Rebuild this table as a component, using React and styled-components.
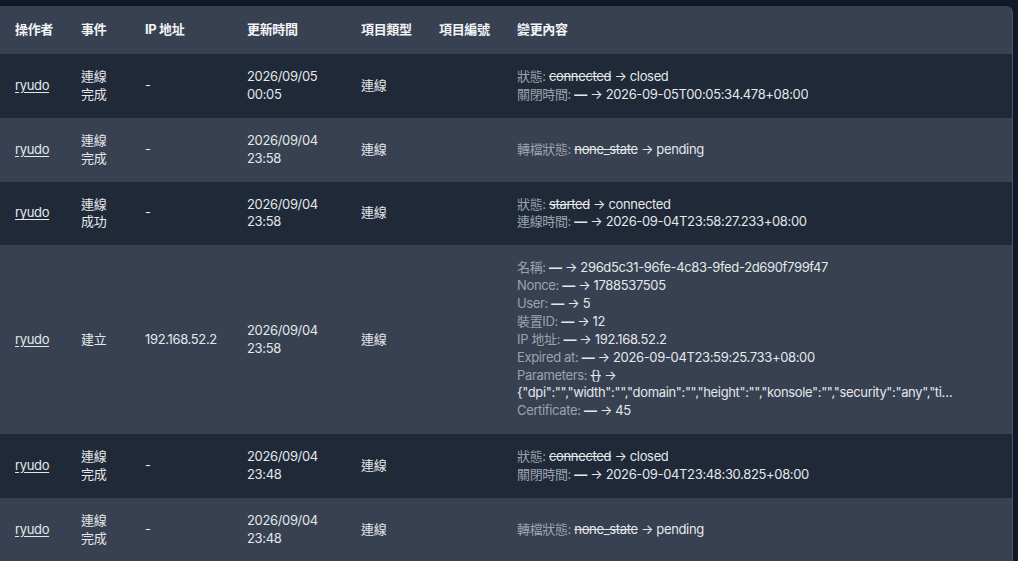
import React from 'react';
import styled, { createGlobalStyle } from 'styled-components';

const GlobalStyle = createGlobalStyle`
  html, body {
    margin: 0;
    padding: 0;
    background: #111827;
    font-family: Inter, "Noto Sans CJK TC", "Noto Sans", sans-serif;
    -webkit-font-smoothing: antialiased;
  }
`;

const Page = styled.div`
  padding-top: 6px;
  width: 1018px;
  height: 555px;
  overflow: hidden;
`;

const Card = styled.div`
  width: 1013px;
  background: #374151;
  border-right: 1px solid #4b5563;
  border-radius: 0 7px 0 0;
  overflow: hidden;
  box-sizing: border-box;
`;

const Table = styled.table`
  width: 100%;
  border-collapse: collapse;
  table-layout: fixed;
  font-size: 13px;
  line-height: 1.375;
  letter-spacing: -0.35px;
  color: #e5e7eb;
`;

const Th = styled.th`
  height: 48px;
  padding: 0 0 0 15px;
  text-align: left;
  font-weight: 700;
  color: #f3f4f6;
  white-space: nowrap;
`;

const Tr = styled.tr`
  background: ${p => (p.$dark ? '#1f2937' : '#374151')};
`;

const Td = styled.td`
  padding: 14px 0 14px 15px;
  vertical-align: middle;
`;

const UserLink = styled.a`
  color: #e5e7eb;
  text-decoration: underline;
  text-underline-offset: 2px;
`;

const Stack = styled.div`
  width: ${p => p.$w}px;
`;

const Change = styled.div`
  white-space: nowrap;
`;

const Label = styled.span`
  color: #9ca3af;
`;

const Old = styled.span`
  text-decoration: line-through;
  color: #e5e7eb;
`;

const Dash = styled.span`
  font-weight: 700;
`;

const New = styled.span`
  display: inline-block;
  max-width: 441px;
  overflow: hidden;
  text-overflow: ellipsis;
  white-space: nowrap;
  vertical-align: bottom;
`;

const Wrap = styled.div`
  white-space: normal;
`;

const rows = [
  {
    event: ['連線', '完成'],
    ip: '-',
    time: ['2026/09/05', '00:05'],
    changes: [
      ['狀態', 'connected', 'closed'],
      ['關閉時間', null, '2026-09-05T00:05:34.478+08:00'],
    ],
  },
  {
    event: ['連線', '完成'],
    ip: '-',
    time: ['2026/09/04', '23:58'],
    changes: [['轉檔狀態', 'none_state', 'pending']],
  },
  {
    event: ['連線', '成功'],
    ip: '-',
    time: ['2026/09/04', '23:58'],
    changes: [
      ['狀態', 'started', 'connected'],
      ['連線時間', null, '2026-09-04T23:58:27.233+08:00'],
    ],
  },
  {
    event: ['建立'],
    ip: '192.168.52.2',
    time: ['2026/09/04', '23:58'],
    changes: [
      ['名稱', null, '296d5c31-96fe-4c83-9fed-2d690f799f47'],
      ['Nonce', null, '1788537505'],
      ['User', null, '5'],
      ['裝置ID', null, '12'],
      ['IP 地址', null, '192.168.52.2'],
      ['Expired at', null, '2026-09-04T23:59:25.733+08:00'],
      [
        'Parameters',
        '{}',
        '{"dpi":"","width":"","domain":"","height":"","konsole":"","security":"any","timezone":"","username":""}',
      ],
      ['Certificate', null, '45'],
    ],
  },
  {
    event: ['連線', '完成'],
    ip: '-',
    time: ['2026/09/04', '23:48'],
    changes: [
      ['狀態', 'connected', 'closed'],
      ['關閉時間', null, '2026-09-04T23:48:30.825+08:00'],
    ],
  },
  {
    event: ['連線', '完成'],
    ip: '-',
    time: ['2026/09/04', '23:48'],
    changes: [['轉檔狀態', 'none_state', 'pending']],
  },
];

function ChangeLine({ label, from, to }) {
  const content = (
    <>
      <Label>{label}: </Label>
      {from ? <Old>{from}</Old> : <Dash>—</Dash>} → <New>{to}</New>
    </>
  );
  if (to.length > 60) return <Wrap>{content}</Wrap>;
  return <Change>{content}</Change>;
}

export default function App() {
  return (
    <Page>
      <GlobalStyle />
      <Card>
        <Table>
          <colgroup>
            <col style={{ width: 66 }} />
            <col style={{ width: 64 }} />
            <col style={{ width: 102 }} />
            <col style={{ width: 114 }} />
            <col style={{ width: 78 }} />
            <col style={{ width: 78 }} />
            <col />
          </colgroup>
          <thead>
            <tr>
              <Th>操作者</Th>
              <Th>事件</Th>
              <Th>IP 地址</Th>
              <Th>更新時間</Th>
              <Th>項目類型</Th>
              <Th>項目編號</Th>
              <Th>變更內容</Th>
            </tr>
          </thead>
          <tbody>
            {rows.map((r, i) => (
              <Tr key={i} $dark={i % 2 === 0}>
                <Td>
                  <UserLink>ryudo</UserLink>
                </Td>
                <Td>
                  {r.event.map(t => (
                    <div key={t}>{t}</div>
                  ))}
                </Td>
                <Td>{r.ip}</Td>
                <Td>
                  {r.time.map(t => (
                    <div key={t}>{t}</div>
                  ))}
                </Td>
                <Td>連線</Td>
                <Td />
                <Td>
                  <Stack $w={450}>
                    {r.changes.map(([label, from, to]) => (
                      <ChangeLine key={label} label={label} from={from} to={to} />
                    ))}
                  </Stack>
                </Td>
              </Tr>
            ))}
          </tbody>
        </Table>
      </Card>
    </Page>
  );
}
